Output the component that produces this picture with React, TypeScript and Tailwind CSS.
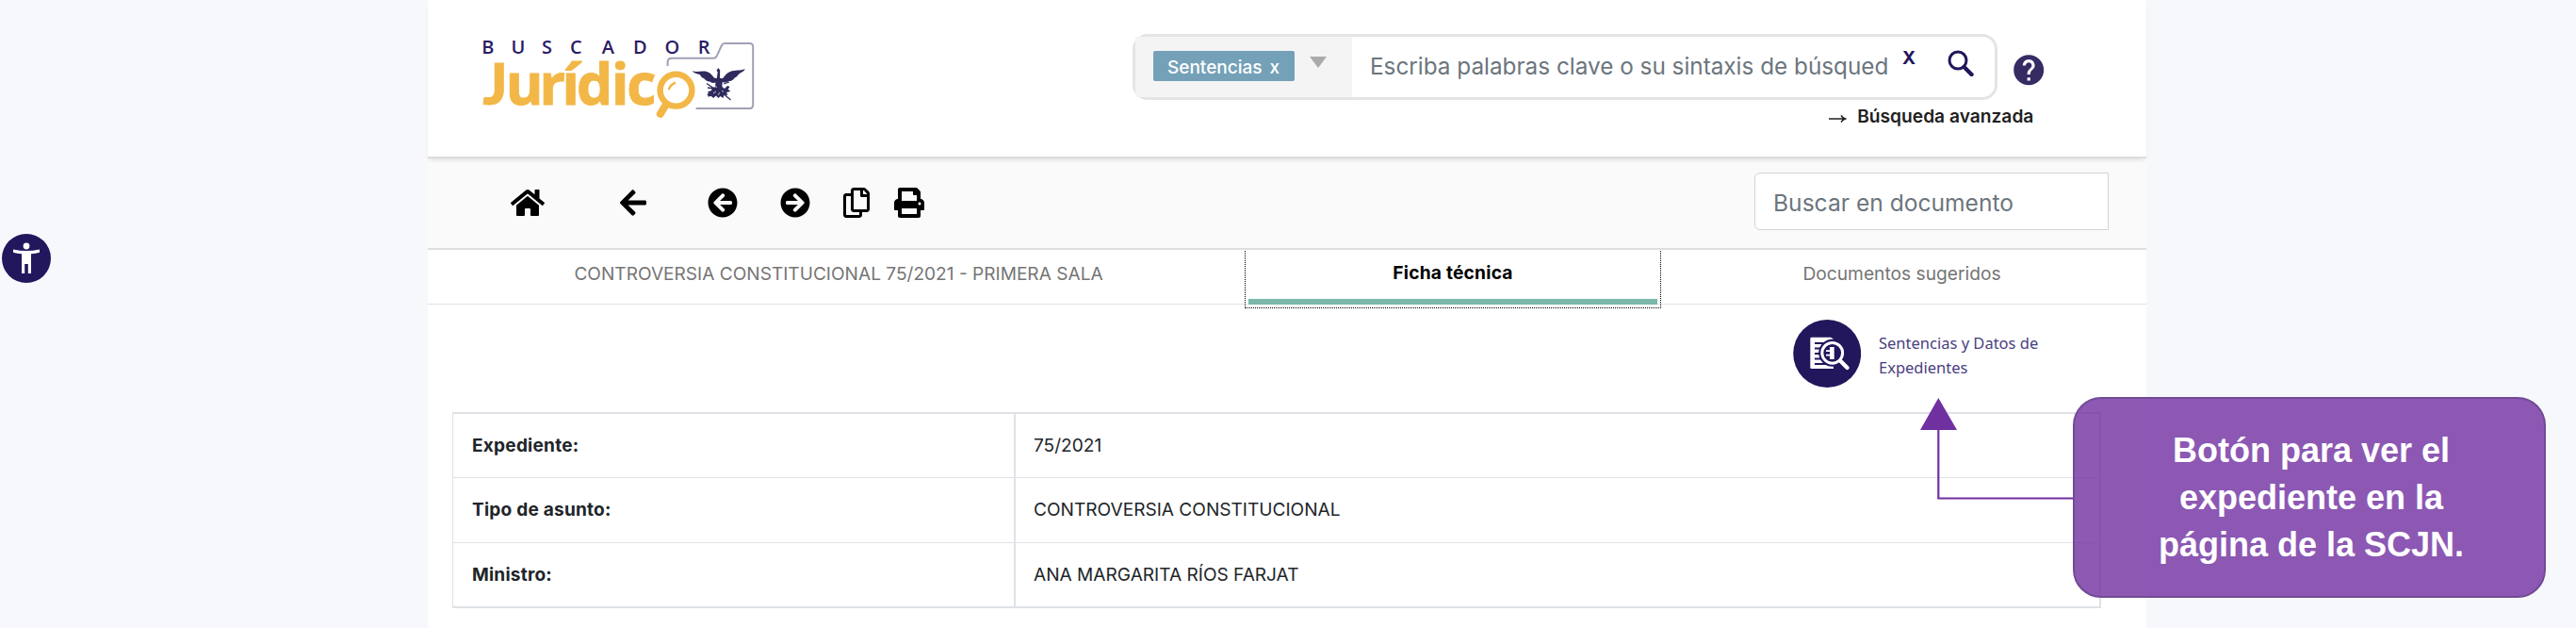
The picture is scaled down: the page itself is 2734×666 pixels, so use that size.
import type { ReactNode } from "react";
import { FaArrowCircleLeft, FaArrowCircleRight, FaArrowLeft, FaHome, FaPrint, FaRegCopy } from "react-icons/fa";
import { MdHelp } from "react-icons/md";

function Logo() {
  return (
    <svg viewBox="510 36 294 94" className="h-[94px] w-[294px]">
      <text x="511.2 542.5 575 605 638.8 672 705.5 740.7" y="56.8" className="fill-[#2b1c66] font-['Open_Sans'] text-[20px] font-semibold">BUSCADOR</text>
      <path d="M708.6 70v-4q0-4.200 4.400-4.200h44.300q2.200 0 3.200-2l5.500-11.800q.9-2 3-2h26.700q3.500 0 3.500 3.500v61.700q0 3.700-3.500 3.700h-57" fill="none" stroke="#a39fb6" strokeWidth="2" />
      <g fill="#f2b746" stroke="#f2b746" strokeWidth="1">
        <text x="512.5" y="110.600" className="font-['Lato'] text-[60px] font-black">J</text>
        <text x="536.8 572.5 596.5 612 649 665.3" y="110.600" className="font-['Open_Sans'] text-[60.500px] font-bold">urídic</text>
      </g>
      <g fill="none" stroke="#f2b746" strokeLinecap="round">
        <circle cx="717.500" cy="95.700" r="18.500" fill="#fff" stroke="none" />
        <circle cx="717.500" cy="95.700" r="16.900" strokeWidth="6.400" />
        <path d="M706.500 111.500L700.800 120.800" strokeWidth="8" />
        <path d="M710 94.300q1.600-4.600 6.200-6.300" strokeWidth="2.400" />
      </g>
      <g fill="#2f2a5e">
        <path d="M734.500 75.300c5 1.800 10-.5 15.500.6 4.500 1 6 4.500 8.500 6.800l2.300.2.900-6.500-1.200-1.600 2-2.800 1.700 2.600-.2 8.200 3 .4c2.500-2.800 4-5.700 8-7.200 5-1.800 10.500-.7 15.800-2.900-1.400 3.200-4.600 3.600-6.200 5.200-2 1.500-2.300 3.700-4.900 4.300-1.600 2.300-3.400 3.700-6.200 3.300-2.200 1.800-4.500 1.700-6.800 1.400l-.4 5.500-3.200 3.500-4-3.500.3-5.300c-2.300.8-4.500.5-6.300-.9-2.700 0-4.500-1.400-5.800-3.300-2.600-.7-3.500-2.500-4.700-4.200-2.600-.9-6-1.100-8.100-3.800z" />
        <path d="M760 92l5-1 4 3 3-3 2.500 1-2 3 2.500 2-4 1 1.500 3-4-.5-1 3.500-3-2-2 2-2.500-2.500-3 2.500-2-2-4 .5 1.500-3-1.500-2 4-1.500 1-3z" />
      </g>
      <path d="M750 88.500l11 7.500M751 93l7 1M768 89l6-2M754 97l-3 4M766 98l9.500 8M770 94.500l4.500 2" fill="none" stroke="#2f2a5e" strokeWidth="1.300" />
      <path d="M757 99l3-2M762 101l2-3M766 96l2 1.500M759 91.500l2 1" fill="none" stroke="#fff" strokeWidth=".7" />
    </svg>
  );
}

function DocumentSearchIcon() {
  return (
    <svg viewBox="1903 339 72 72" className="h-[72px] w-[72px]">
      <circle cx="1939.200" cy="375" r="36" fill="#22165c" />
      <path d="M1922.500 357.800h20.500l3 2v31.200h-23.500q-1.200 0-1.200-1.200v-30.800q0-1.200 1.200-1.200z" fill="#fff" />
      <path d="M1926 364h20M1926 369.500h20M1926 375h20M1926 380.500h20M1926 386h20" stroke="#22165c" strokeWidth="2.200" />
      <circle cx="1944.700" cy="374.300" r="14.500" fill="#22165c" />
      <circle cx="1944.700" cy="374.300" r="10.900" fill="none" stroke="#fff" strokeWidth="3" />
      <path d="M1942 368h4.700v13h-4.700v-3.500h-4v-1.700h4v-2.800h-4v-1.700h4z" fill="#fff" />
      <path d="M1954 383.500l6.800 6.500" stroke="#22165c" strokeWidth="7" />
      <path d="M1953.500 383l7 7" stroke="#fff" strokeWidth="4.400" strokeLinecap="round" />
    </svg>
  );
}

function AccessibilityButton() {
  return (
    <button className="absolute left-[2px] top-[248px] h-[52px] w-[52px]">
      <svg viewBox="0 0 52 52" className="h-full w-full">
        <circle cx="26" cy="26" r="26" fill="#22165c" />
        <circle cx="26" cy="13" r="3.400" fill="#fff" />
        <path d="M12 16.500q14 3 28 0v3.200q-4.500 1.300-9 1.600V42h-3.200V32h-3.600v10H21V21.300q-4.500-.3-9-1.600z" fill="#fff" />
      </svg>
    </button>
  );
}

function Header() {
  return (
    <header className="relative z-20 flex h-[168px] items-start border-b-2 border-[#dfddd9] bg-white shadow-[0_3px_5px_-2px_rgba(0,0,0,0.14)]">
      <div className="ml-[56px] mt-[36px]">
        <Logo />
      </div>
      <div className="ml-[398px] mt-[36px] flex flex-col">
        <div className="flex items-center">
          <div className="flex h-[70px] w-[918px] items-stretch rounded-[16px] border-[3px] border-[#e4e4e4]">
            <div className="flex w-[230px] items-center bg-[#f4f4f4] pb-[2px] pl-[19px]">
              <span className="flex h-[32px] w-[150px] items-center gap-[8px] rounded-[2px] bg-[#74a1b8] pl-[15px] pt-[2px] text-[19px] font-medium leading-none text-white">
                <span>Sentencias</span>
                <span>x</span>
              </span>
              <span className="mb-[8px] ml-[16px] border-x-[9.500px] border-t-[12px] border-x-transparent border-t-[#aaaaaa]" />
            </div>
            <div className="flex flex-1 items-center pb-[2px] pl-[19px]">
              <span className="w-[565px] whitespace-nowrap text-[24.300px] leading-none text-[#6c757d]">Escriba palabras clave o su sintaxis de búsqued</span>
              <span className="mb-[18px] w-[48px] text-[19px] font-bold leading-none text-[#22165c]">X</span>
              <svg viewBox="0 0 28 28" className="mb-[6px] h-[28px] w-[28px]" fill="none" stroke="#22165c">
                <circle cx="11" cy="11" r="9" strokeWidth="3" />
                <path d="M17.500 18l8 8" strokeWidth="4.400" strokeLinecap="round" />
              </svg>
            </div>
          </div>
          <MdHelp className="ml-[14px] mt-[6px] h-[38.400px] w-[38.400px] text-[#362b63]" />
        </div>
        <a className="mt-[8px] flex h-[20px] items-center self-end text-[19.200px] font-semibold leading-none text-[#212121]">
          <svg viewBox="0 0 20 10" className="mr-[11px] mt-[4px] h-[10px] w-[20px]">
            <path d="M1 5h17M14 1.500q1.500 2.500 4.500 3.500-3 1-4.500 3.500" fill="none" stroke="#212121" strokeWidth="1.500" />
          </svg>
          <span className="mr-[14px]">Búsqueda avanzada</span>
        </a>
      </div>
    </header>
  );
}

function Toolbar() {
  return (
    <div className="relative z-10 flex h-[97px] items-center justify-between border-b-2 border-[#dedede] bg-[#fafafa] pl-[88px] pr-[40px] text-black">
      <div className="mb-[1px] flex items-center">
        <FaHome className="h-[32px] w-[36px]" />
        <FaArrowLeft className="ml-[80px] h-[32px] w-[28px]" />
        <FaArrowCircleLeft className="ml-[65px] h-[32px] w-[32px]" />
        <FaArrowCircleRight className="ml-[45px] h-[32px] w-[32px]" />
        <FaRegCopy className="ml-[35px] h-[32px] w-[28px]" />
        <FaPrint className="ml-[26px] h-[32px] w-[32px]" />
      </div>
      <div className="mb-[4px] flex h-[61px] w-[376px] items-center rounded-l-[6px] border border-[#ced4da] bg-white pl-[19px] pt-[3px] text-[24.600px] leading-none text-[#6c757d]">
        Buscar en documento
      </div>
    </div>
  );
}

function Tabs() {
  return (
    <nav className="flex h-[58px] border-b border-[#dee2e6] text-[19.200px] leading-none text-[#757575]">
      <div className="flex w-[871px] items-center justify-center pb-[5px] pl-[1px] text-[19.100px]">CONTROVERSIA CONSTITUCIONAL 75/2021 - PRIMERA SALA</div>
      <div className="flex h-[58px] w-[434px] items-center justify-center border-b-[6px] border-[#7bb7aa] pb-[2px] font-bold tracking-[0.200px] text-black outline outline-1 outline-offset-[3px] outline-dotted outline-black">
        Ficha técnica
      </div>
      <div className="flex w-[519px] items-center justify-center pb-[5px]">Documentos sugeridos</div>
    </nav>
  );
}

function Row({ label, children }: { label: string; children: ReactNode }) {
  return (
    <div className="flex h-[69px] border-b border-[#dee2e6] text-[19.100px] leading-none text-[#212529] first:h-[68px] last:border-b-2">
      <div className="flex w-[597px] items-center border-r-2 border-[#dee2e6] pl-[20px] font-bold tracking-[0.200px]">{label}</div>
      <div className="flex flex-1 items-center pl-[19px]">{children}</div>
    </div>
  );
}

function Callout() {
  return (
    <>
      <svg viewBox="2036 420 166 112" className="absolute left-[2036px] top-[420px] h-[112px] w-[166px]">
        <path d="M2057.300 455v73.500H2200" fill="none" stroke="#7030a0" strokeWidth="2.200" />
        <path d="M2057.300 422L2077 456h-39z" fill="#7030a0" />
      </svg>
      <div className="absolute left-[2200px] top-[421px] flex h-[213px] w-[502px] items-center justify-center rounded-[30px] border-2 border-[#714b96] bg-[rgba(112,48,160,0.800)] pl-[4px] text-center font-['Liberation_Sans',sans-serif] text-[36px] font-bold leading-[50px] text-white">
        <p>
          Botón para ver el
          <br />
          expediente en la
          <br />
          página de la SCJN.
        </p>
      </div>
    </>
  );
}

export default function App() {
  return (
    <div className="relative h-[666px] w-[2734px] overflow-hidden bg-[#f7f8fc] font-['Inter',sans-serif]">
      <main className="ml-[454px] h-[666px] w-[1824px] bg-white">
        <Header />
        <Toolbar />
        <Tabs />
        <a className="ml-[1449px] mt-[16px] flex h-[72px] items-start">
          <DocumentSearchIcon />
          <span className="ml-[19px] mt-[12px] font-['Noto_Sans',sans-serif] text-[16.500px] leading-[25.700px] text-[#4a4080]">
            Sentencias y Datos de
            <br />
            Expedientes
          </span>
        </a>
        <div className="ml-[26px] mt-[26px] w-[1750px] border-l border-r-2 border-t-2 border-[#dee2e6]">
          <Row label="Expediente:">75/2021</Row>
          <Row label="Tipo de asunto:">CONTROVERSIA CONSTITUCIONAL</Row>
          <Row label="Ministro:">ANA MARGARITA RÍOS FARJAT</Row>
        </div>
      </main>
      <AccessibilityButton />
      <Callout />
    </div>
  );
}
